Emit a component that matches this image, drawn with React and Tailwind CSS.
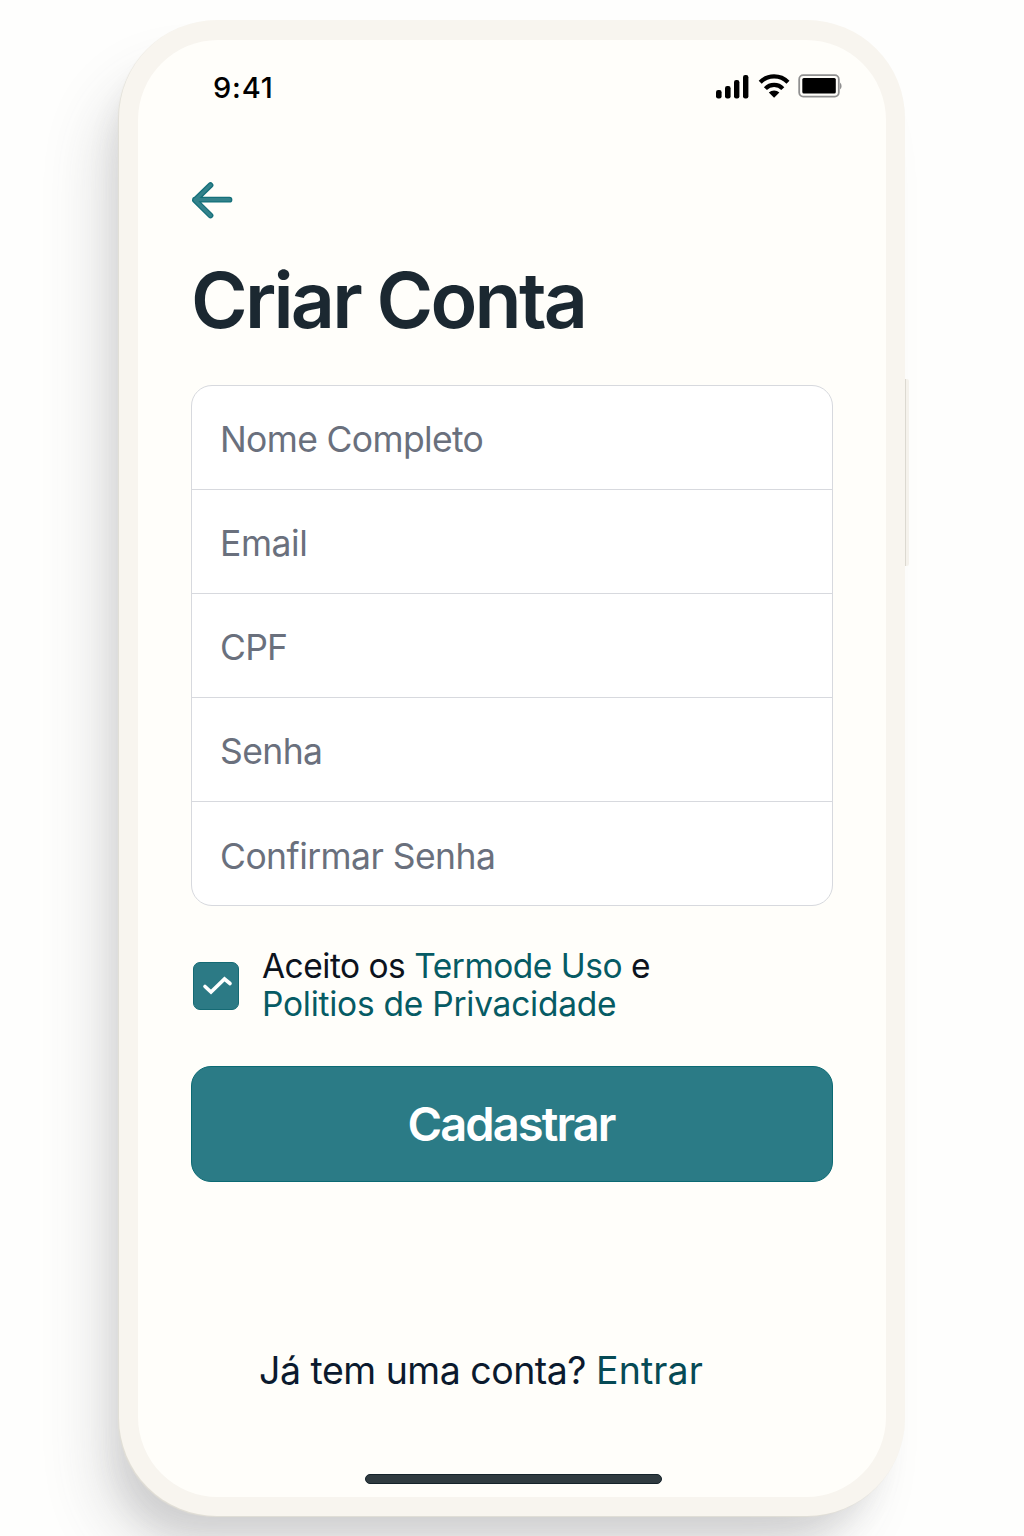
const FIELDS = [
  { label: "Nome Completo", cls: "h-[104px] pt-[4px] tracking-[-0.650px]" },
  { label: "Email", cls: "h-[104px] pt-[4px] tracking-[-0.450px]" },
  { label: "CPF", cls: "h-[104px] pt-[4px] tracking-[-0.800px]" },
  { label: "Senha", cls: "h-[104px] pt-[4px] tracking-[-0.600px]" },
  { label: "Confirmar Senha", cls: "h-[103px] pt-[6px] tracking-[-0.550px]" },
];

function StatusBar() {
  return (
    <div className="flex h-[28px] items-center justify-between pl-[75px] pr-[44px]">
      <span className="text-[29px] font-medium leading-[28px] tracking-[0.800px] text-black">9:41</span>
      <svg className="h-[28px] w-[128px]" viewBox="0 0 128 28" fill="none">
        <g fill="#000">
          <rect x="2" y="16" width="5.6" height="8.5" rx="2.2" />
          <rect x="11" y="12" width="5.6" height="12.5" rx="2.2" />
          <rect x="20" y="6" width="5.4" height="18.5" rx="2.2" />
          <rect x="29" y="1" width="5.4" height="23.5" rx="2.2" />
        </g>
        <g stroke="#000" strokeWidth="4.2">
          <path d="M46.2 8.2 A19.5 19.5 0 0 1 74 8.2" />
          <path d="M51.4 14.600 A12 12 0 0 1 68.8 14.600" />
        </g>
        <path d="M60.1 23.800 L54.800 18.6 A8 8 0 0 1 65.400 18.6 Z" fill="#000" />
        <rect x="85.200" y="1.2" width="39.6" height="21.4" rx="4" stroke="#909090" strokeWidth="1.800" />
        <path d="M126 8.5 Q127.600 9.5 127.600 12 Q127.600 14.500 126 15.500 Z" fill="#909090" />
        <rect x="88.300" y="4" width="33.500" height="15.500" rx="1.500" fill="#000" />
      </svg>
    </div>
  );
}

export default function App() {
  return (
    <div className="flex h-[1536px] w-[1024px] items-start overflow-hidden bg-[#fefefd] pl-[119px] pt-[20px] font-['Inter',sans-serif]">
      <div className="relative h-[1496px] w-[786px] shrink-0 rounded-[98px] bg-[#f8f5ef] px-[19px] pt-[20px] shadow-[-1px_1px_1px_#e2dfd6,-14px_32px_28px_-10px_rgba(70,70,75,0.10),-32px_46px_60px_-14px_rgba(80,80,85,0.18)]">
        <div className="absolute left-[786px] top-[359px] h-[187px] w-[4px] rounded-r-[2px] border-l border-[#dcd9d1] bg-[#f5f2ec]" />
        <div className="flex h-[1457px] w-[748px] flex-col rounded-[80px] bg-[#fffefa] pt-[34px]">
          <StatusBar />
          <div className="flex flex-col px-[53px]">
            <svg className="mt-[78px] h-[40px] w-[44px]" viewBox="0 0 44 40" fill="none" strokeLinecap="round" strokeLinejoin="round">
              <path d="M38.500 19.700H4M19.500 5.200L4 20.200L19.500 35.500" stroke="#15707a" strokeWidth="5.800" />
              <path d="M38.500 19.700H4M19.500 5.200L4 20.200L19.500 35.500" stroke="#33828b" strokeWidth="3.200" />
            </svg>
            <h1 className="mt-[30px] h-[100px] whitespace-nowrap text-[77px] font-semibold leading-[100px] tracking-[-2.800px] text-[#1b2831]">Criar Conta</h1>
            <div className="mt-[35px] flex h-[521px] w-[642px] flex-col divide-y divide-[#d7d9de] rounded-[21px] border border-[#d7d9de] bg-white">
              {FIELDS.map((f) => (
                <label key={f.label} className={`flex items-center pl-[28px] text-[35.500px] font-normal leading-[44px] text-[#6a707d] ${f.cls}`}>
                  {f.label}
                </label>
              ))}
            </div>
            <div className="mt-[40px] flex h-[78px] items-center pl-[2px]">
              <div className="mt-[1px] flex h-[48px] w-[46px] shrink-0 items-center justify-center rounded-[7px] border border-[#156a74] bg-[#2c7a85]">
                <svg className="ml-[1px] h-[24px] w-[32px]" viewBox="0 0 32 24" fill="none" stroke="#fff" strokeWidth="3.600" strokeLinecap="round">
                  <path d="M4 12.500L10 18L23.500 5L29 9.500" />
                </svg>
              </div>
              <p className="ml-[23px] whitespace-nowrap text-[33.500px] leading-[38.500px] text-[#0c131d]">
                <span className="tracking-[-0.500px]">
                  Aceito os <span className="text-[#065b64]">Termode Uso</span> e
                </span>
                <br />
                <span className="tracking-[-0.250px] text-[#065b64]">Politios de Privacidade</span>
              </p>
            </div>
            <button className="mt-[42px] flex h-[116px] w-[642px] items-center justify-center rounded-[20px] border-[1.500px] border-[#0b6a73] bg-[#2b7b86] pr-[2px] text-[47px] font-semibold leading-[60px] tracking-[-1.900px] text-white">
              Cadastrar
            </button>
          </div>
          <p className="mt-[164px] whitespace-nowrap pl-[121px] text-[37.500px] leading-[50px] text-[#0b1a2e]">
            <span className="tracking-[-0.500px]">Já tem uma conta? </span>
            <span className="tracking-[0.100px] text-[#064a55]">Entrar</span>
          </p>
          <div className="ml-[227px] mt-[78px] h-[10px] w-[297px] rounded-full border border-[#15232a] bg-[#303b40]" />
        </div>
      </div>
    </div>
  );
}
